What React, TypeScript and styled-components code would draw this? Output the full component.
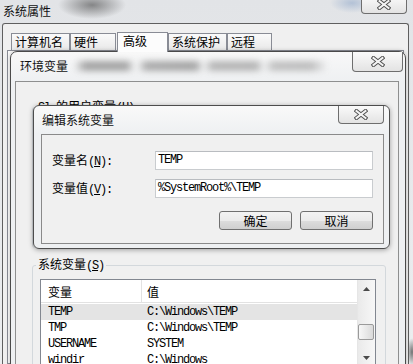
import styled, { createGlobalStyle } from 'styled-components';

const GlobalStyle = createGlobalStyle`
  html, body { margin: 0; padding: 0; }
  body {
    font-family: "Noto Sans CJK SC", "Liberation Sans", sans-serif;
    font-size: 12px;
    color: #000;
    background: #e6e8eb;
  }
  * { box-sizing: border-box; }
`;

const MONO = `"Liberation Mono", "Noto Sans CJK SC", monospace`;

const Desktop = styled.div`
  position: relative;
  width: 413px;
  height: 364px;
  overflow: hidden;
  background:
    radial-gradient(ellipse 34px 14px at 92px 5px, rgba(70, 70, 70, 0.6), rgba(70, 70, 70, 0) 100%),
    radial-gradient(ellipse 22px 10px at 352px 3px, rgba(140, 165, 200, 0.55), rgba(140, 165, 200, 0) 100%),
    radial-gradient(ellipse 5px 14px at 412px 352px, rgba(60, 60, 60, 0.7), rgba(60, 60, 60, 0) 100%),
    linear-gradient(180deg, #e2e4e7, #eceef0);
`;

/* ---------- 系统属性 ---------- */

const SysWindow = styled.div`
  position: absolute;
  left: 2px;
  top: 0;
  width: 407px;
  height: 364px;
  display: flex;
  flex-direction: column;
`;

const SysTitleBar = styled.div`
  height: 23px;
  display: flex;
  align-items: flex-start;
  justify-content: space-between;
`;

const SysTitle = styled.span`
  line-height: 16px;
  padding: 3px 0 0 1px;
  color: #111;
`;

const SysClient = styled.div`
  flex: 1;
  display: flex;
  flex-direction: column;
  border: 1px solid #5f5f5f;
  border-bottom: 0;
  border-radius: 3px 3px 0 0;
  background: #f0f0f0;
  padding: 9px 4px 0 4px;
`;

const TabStrip = styled.div`
  display: flex;
  height: 17px;
  margin-left: 4px;
`;

const Tab = styled.div<{ $w: number; $active?: boolean }>`
  width: ${p => p.$w}px;
  height: ${p => (p.$active ? 20 : 17)}px;
  margin-top: ${p => (p.$active ? -1 : 0)}px;
  margin-left: ${p => (p.$active ? 1 : 0)}px;
  padding-left: ${p => (p.$active ? 5 : 3)}px;
  position: relative;
  z-index: ${p => (p.$active ? 1 : 0)};
  border: 1px solid #898c95;
  border-bottom: 0;
  line-height: 16px;
  white-space: nowrap;
  background: ${p => (p.$active ? '#fcfcfc' : 'linear-gradient(180deg, #fafafa, #e9e9e9)')};
`;

const TabPanel = styled.div`
  flex: 1;
  border: 1px solid #898c95;
  background: #fbfbfb;
`;

/* ---------- shared window chrome ---------- */

const CloseButton = styled.div<{ $w: number; $h: number; $top?: number; $right: number }>`
  width: ${p => p.$w}px;
  height: ${p => p.$h}px;
  margin-top: ${p => p.$top ?? 0}px;
  margin-left: auto;
  margin-right: ${p => p.$right}px;
  flex-shrink: 0;
  display: flex;
  align-items: center;
  justify-content: center;
  border: 1px solid #6e6e6e;
  border-top: 0;
  border-radius: 0 0 4px 4px;
  background: linear-gradient(180deg, #fafafa, #e3e3e3);
`;

function CloseGlyph() {
  return (
    <svg width="14" height="11" viewBox="0 0 14 11">
      <path d="M2.5 2 L11.5 9 M11.5 2 L2.5 9" stroke="#4f4f4f" strokeWidth="4" strokeLinecap="square" fill="none" />
      <path d="M2.5 2 L11.5 9 M11.5 2 L2.5 9" stroke="#f4f4f4" strokeWidth="2" strokeLinecap="square" fill="none" />
    </svg>
  );
}

const WinTitle = styled.span<{ $left: number }>`
  line-height: 16px;
  padding: 6px 0 0 ${p => p.$left}px;
  white-space: nowrap;
  color: #111;
`;

/* blurred-out text in the original capture */
const Smear = styled.div`
  width: 276px;
  height: 10px;
  margin: 9px 0 0 6px;
  filter: blur(3px);
  opacity: 0.75;
  background: linear-gradient(
    90deg,
    transparent 0,
    #8a8a8a 4%,
    #8a8a8a 19%,
    transparent 22%,
    transparent 23%,
    #959595 26%,
    #8a8a8a 44%,
    transparent 47%,
    #a2a2a2 50%,
    #a0a0a0 66%,
    transparent 69%,
    #b0b0b0 72%,
    #acacac 86%,
    transparent 92%
  );
`;

/* ---------- 环境变量 ---------- */

const EnvWindow = styled.div`
  position: absolute;
  left: 10px;
  top: 51px;
  width: 396px;
  height: 330px;
  display: flex;
  flex-direction: column;
  border: 1px solid #4a4a4a;
  border-radius: 7px 7px 0 0;
  background: linear-gradient(180deg, #f8f8f8, #eef0f2 30px);
  box-shadow: 0 0 4px rgba(0, 0, 0, 0.25);
`;

const EnvTitleBar = styled.div`
  height: 29px;
  display: flex;
  align-items: flex-start;
`;

const EnvClient = styled.div`
  flex: 1;
  display: flex;
  flex-direction: column;
  margin: 0 6px 0 4px;
  border: 1px solid #8e8f8f;
  border-bottom: 0;
  background: #f0f0f0;
  padding: 12px 12px 0 16px;
`;

const GroupBox = styled.fieldset<{ $h?: number; $gap?: number }>`
  margin: ${p => p.$gap ?? 0}px 0 0 0;
  padding: 5px 9px 0 7px;
  min-width: 0;
  border: 1px solid #d3d8dc;
  border-radius: 3px;
  ${p => (p.$h ? `height: ${p.$h}px; flex-shrink: 0;` : 'flex: 1;')}
`;

const GroupLabel = styled.legend`
  padding: 0 2px;
  margin-left: -4px;
  line-height: 16px;
  white-space: nowrap;
`;

const Ascii = styled.span`
  font-family: ${MONO};
  letter-spacing: -1.2px;
`;

const VarList = styled.div`
  height: 88px;
  display: flex;
  border: 1px solid #828790;
  background: #fff;
  overflow: hidden;
`;

const ListMain = styled.div`
  flex: 1;
  display: flex;
  flex-direction: column;
`;

const ListHeader = styled.div`
  display: flex;
  height: 23px;
  border-bottom: 1px solid #e2e2e2;
  flex-shrink: 0;
`;

const HeaderCell = styled.div<{ $w?: number }>`
  ${p => (p.$w ? `width: ${p.$w}px; border-right: 1px solid #e2e2e2;` : 'flex: 1;')}
  padding: 2px 0 0 ${p => (p.$w ? 7 : 5)}px;
  line-height: 20px;
`;

const ListRows = styled.div`
  padding-top: 1px;
`;

const Row = styled.div<{ $selected?: boolean }>`
  display: flex;
  height: 16px;
  line-height: 16px;
  font-family: ${MONO};
  letter-spacing: -1.2px;
  white-space: nowrap;
  background: ${p => (p.$selected ? '#e4e4e4' : 'transparent')};
`;

const Cell = styled.div<{ $w?: number }>`
  ${p => (p.$w ? `width: ${p.$w}px;` : 'flex: 1;')}
  padding-left: ${p => (p.$w ? 7 : 5)}px;
  overflow: hidden;
`;

const ScrollBar = styled.div`
  width: 18px;
  display: flex;
  flex-direction: column;
  border-left: 1px solid #e6e6e6;
  background: linear-gradient(90deg, #eaeaea, #f7f7f7);
`;

const ScrollArrow = styled.div`
  height: 17px;
  display: flex;
  align-items: center;
  justify-content: center;
  flex-shrink: 0;
`;

const ScrollThumb = styled.div`
  height: 16px;
  margin: 27px 1px 0 0;
  border: 1px solid #9a9a9a;
  border-radius: 2px;
  background: linear-gradient(90deg, #f7f7f7, #dadada);
`;

const ScrollSpacer = styled.div`
  flex: 1;
`;

function Arrow({ down }: { down?: boolean }) {
  return (
    <svg width="7" height="4" viewBox="0 0 7 4">
      <polygon points={down ? '0,0 7,0 3.5,4' : '3.5,0 7,4 0,4'} fill="#4a4a4a" />
    </svg>
  );
}

/* ---------- 编辑系统变量 ---------- */

const EditWindow = styled.div`
  position: absolute;
  left: 33px;
  top: 105px;
  width: 357px;
  height: 144px;
  display: flex;
  flex-direction: column;
  border: 1px solid #4d4d4d;
  border-radius: 6px;
  background: linear-gradient(180deg, #f9f9f9, #eef0f2 28px);
  box-shadow: 0 1px 5px rgba(0, 0, 0, 0.35);
`;

const EditTitleBar = styled.div`
  height: 28px;
  display: flex;
  align-items: flex-start;
  flex-shrink: 0;
`;

const EditClient = styled.div`
  flex: 1;
  margin: 0 5px 4px 7px;
  border: 1px solid #8a8a8a;
  background: #f0f0f0;
  padding: 16px 10px 0 10px;
`;

const FormGrid = styled.div`
  display: grid;
  grid-template-columns: 103px 1fr;
  grid-auto-rows: 19px;
  row-gap: 9px;
  align-items: center;
`;

const FieldLabel = styled.div`
  line-height: 16px;
  white-space: nowrap;
`;

const TextBox = styled.div`
  height: 19px;
  border: 1px solid #c9cccf;
  border-top-color: #b9bcc0;
  background: #fff;
  padding-left: 2px;
  line-height: 17px;
  font-family: ${MONO};
  letter-spacing: -1.2px;
  white-space: nowrap;
`;

const ButtonRow = styled.div`
  display: flex;
  justify-content: flex-end;
  gap: 8px;
  margin-top: 13px;
`;

const PushButton = styled.div`
  width: 73px;
  height: 19px;
  border: 1px solid #707070;
  border-radius: 3px;
  text-align: center;
  line-height: 17px;
  background: linear-gradient(180deg, #f3f3f3 0%, #ebebeb 50%, #dddddd 51%, #cfcfcf 100%);
`;

const tabs = [
  { label: '计算机名', w: 59 },
  { label: '硬件', w: 46 },
  { label: '高级', w: 51, active: true },
  { label: '系统保护', w: 59 },
  { label: '远程', w: 45 },
];

const sysVars = [
  { name: 'TEMP', value: 'C:\\Windows\\TEMP', selected: true },
  { name: 'TMP', value: 'C:\\Windows\\TEMP' },
  { name: 'USERNAME', value: 'SYSTEM' },
  { name: 'windir', value: 'C:\\Windows' },
];

export default function App() {
  return (
    <>
      <GlobalStyle />
      <Desktop>
        <SysWindow>
          <SysTitleBar>
            <SysTitle>系统属性</SysTitle>
            <CloseButton $w={46} $h={18} $top={-4} $right={2}>
              <CloseGlyph />
            </CloseButton>
          </SysTitleBar>
          <SysClient>
            <TabStrip>
              {tabs.map(t => (
                <Tab key={t.label} $w={t.w} $active={t.active}>
                  {t.label}
                </Tab>
              ))}
            </TabStrip>
            <TabPanel />
          </SysClient>
        </SysWindow>

        <EnvWindow>
          <EnvTitleBar>
            <WinTitle $left={9}>环境变量</WinTitle>
            <Smear />
            <CloseButton $w={51} $h={20} $right={2}>
              <CloseGlyph />
            </CloseButton>
          </EnvTitleBar>
          <EnvClient>
            <GroupBox $h={150} $gap={4}>
              <GroupLabel>
                <Ascii>Sl </Ascii>的用户变量<Ascii>(<u>U</u>)</Ascii>
              </GroupLabel>
            </GroupBox>
            <GroupBox $gap={8}>
              <GroupLabel>
                系统变量<Ascii>(<u>S</u>)</Ascii>
              </GroupLabel>
              <VarList>
                <ListMain>
                  <ListHeader>
                    <HeaderCell $w={101}>变量</HeaderCell>
                    <HeaderCell>值</HeaderCell>
                  </ListHeader>
                  <ListRows>
                    {sysVars.map(v => (
                      <Row key={v.name} $selected={v.selected}>
                        <Cell $w={101}>{v.name}</Cell>
                        <Cell>{v.value}</Cell>
                      </Row>
                    ))}
                  </ListRows>
                </ListMain>
                <ScrollBar>
                  <ScrollArrow>
                    <Arrow />
                  </ScrollArrow>
                  <ScrollThumb />
                  <ScrollSpacer />
                  <ScrollArrow>
                    <Arrow down />
                  </ScrollArrow>
                </ScrollBar>
              </VarList>
            </GroupBox>
          </EnvClient>
        </EnvWindow>

        <EditWindow>
          <EditTitleBar>
            <WinTitle $left={8}>编辑系统变量</WinTitle>
            <CloseButton $w={46} $h={18} $right={5}>
              <CloseGlyph />
            </CloseButton>
          </EditTitleBar>
          <EditClient>
            <FormGrid>
              <FieldLabel>
                变量名<Ascii>(<u>N</u>):</Ascii>
              </FieldLabel>
              <TextBox>TEMP</TextBox>
              <FieldLabel>
                变量值<Ascii>(<u>V</u>):</Ascii>
              </FieldLabel>
              <TextBox>%SystemRoot%\TEMP</TextBox>
            </FormGrid>
            <ButtonRow>
              <PushButton>确定</PushButton>
              <PushButton>取消</PushButton>
            </ButtonRow>
          </EditClient>
        </EditWindow>
      </Desktop>
    </>
  );
}
